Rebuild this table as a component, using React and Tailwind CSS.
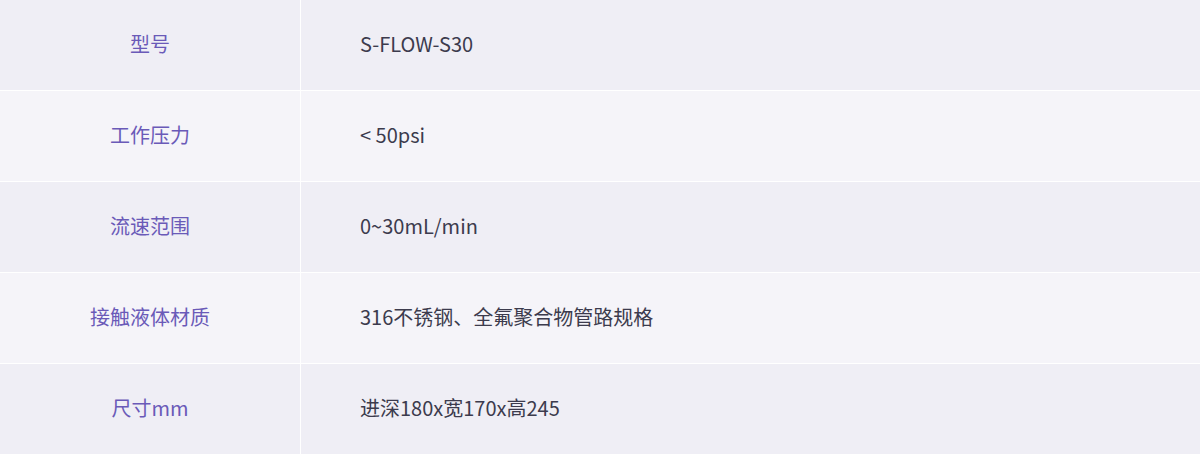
const rows = [
  { label: '型号', value: 'S-FLOW-S30' },
  { label: '工作压力', value: '< 50psi' },
  { label: '流速范围', value: '0~30mL/min' },
  { label: '接触液体材质', value: '316不锈钢、全氟聚合物管路规格' },
  { label: '尺寸mm', value: '进深180x宽170x高245' },
];

export default function App() {
  return (
    <div className="w-[1200px] h-[454px] bg-white flex flex-col gap-px font-['Noto_Sans_CJK_SC','Noto_Sans',sans-serif] text-[20px]">
      {rows.map((row, i) => {
        const bg = i % 2 === 0 ? 'bg-[#efeef5]' : 'bg-[#f5f4f9]';
        return (
          <div key={row.label} className="flex h-[90px] gap-px">
            <div className={`w-[300px] flex items-center justify-center pb-[2px] text-[#6a5ab8] ${bg}`}>
              {row.label}
            </div>
            <div className={`flex-1 flex items-center pl-[59px] pb-[2px] text-[#3c3b4d] ${bg}`}>
              {row.value}
            </div>
          </div>
        );
      })}
    </div>
  );
}
